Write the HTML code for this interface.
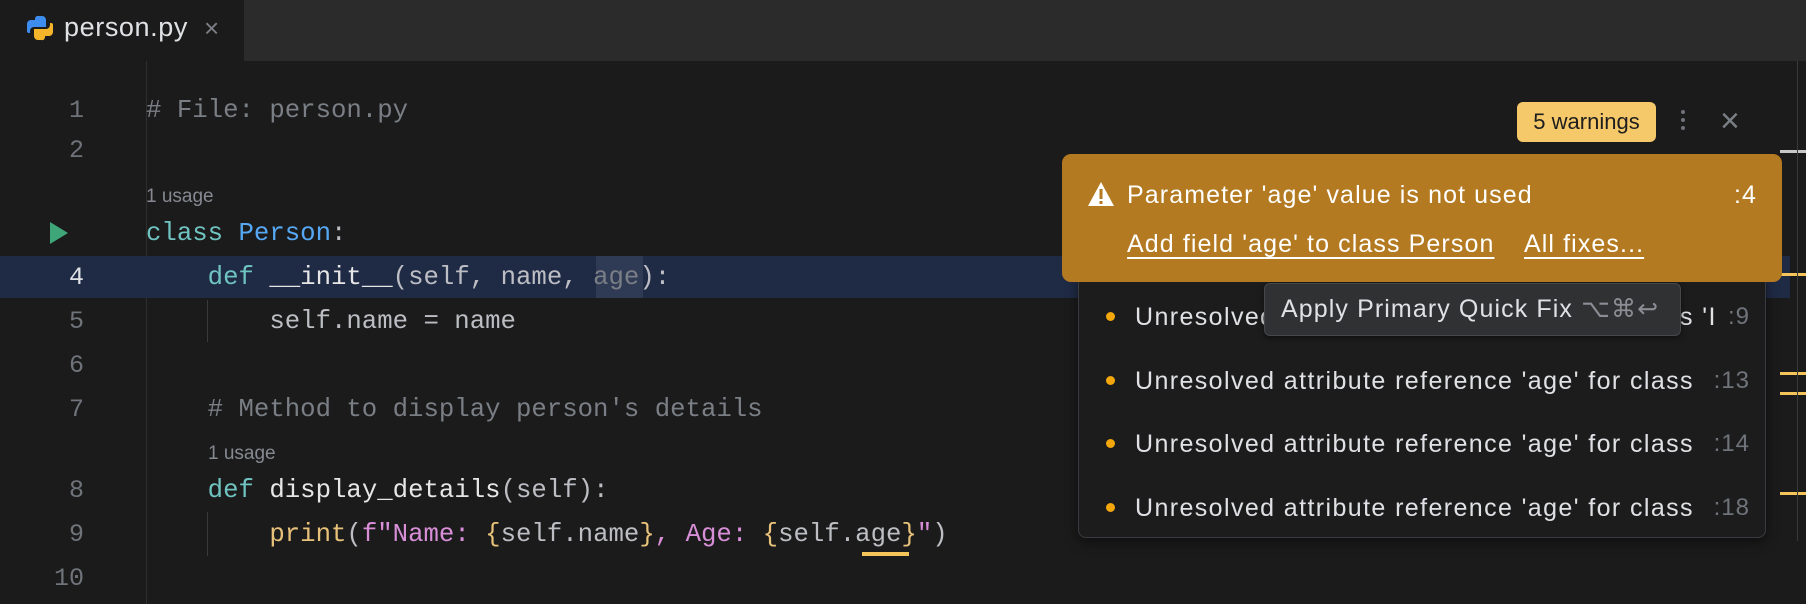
<!DOCTYPE html>
<html><head><meta charset="utf-8"><style>
*{margin:0;padding:0;box-sizing:border-box}
body{width:1806px;height:604px;background:#1b1b1b;position:relative;overflow:hidden;font-family:"Liberation Sans",sans-serif}
.a{position:absolute;white-space:pre}
.m{font-family:"Liberation Mono",monospace;font-size:25.7px;line-height:44px;color:#bcbec4}
.ln{font-family:"Liberation Mono",monospace;font-size:25px;line-height:44px;color:#6f737a;width:60px;text-align:right;left:24px}
.c{color:#7a7e85}.k{color:#6fc3c0}.b{color:#56a8f5}.y{color:#e8c27a}.p{color:#d88fd8}.g{color:#7a7e85}
.u{font-size:19px;color:#868991;font-family:"Liberation Sans",sans-serif}
.it{font-size:25px;letter-spacing:1.4px;color:#dfe1e5;line-height:30px}
.num{font-size:24px;letter-spacing:1px;color:#6f737a;line-height:30px;width:80px;text-align:right;left:1670px}
.dot{width:9px;height:9px;border-radius:50%;background:#f2a80c;position:absolute}
.w{font-size:25px;letter-spacing:1.1px;line-height:30px;color:#fff}
</style></head><body>
<div class="a" style="left:0;top:0;width:1806px;height:61px;background:#2b2b2b"></div>
<div class="a" style="left:0;top:0;width:244px;height:61px;background:#1b1b1b"></div>
<svg class="a" style="left:27px;top:15px" width="26" height="26" viewBox="0 0 26 26">
<path d="M12 1h3a4 4 0 0 1 4 4v7H7a4 4 0 0 0-4 4v2H2a2 2 0 0 1-2-2V9a4 4 0 0 1 4-4h4V4a3 3 0 0 1 4-3z" fill="#3d8df0"/>
<path d="M14 25h-3a4 4 0 0 1-4-4v-7h12a4 4 0 0 0 4-4V8h1a2 2 0 0 1 2 2v7a4 4 0 0 1-4 4h-4v1a3 3 0 0 1-4 3z" fill="#f5b52a"/>
</svg>
<div class="a" style="left:64px;top:12px;font-size:27px;letter-spacing:0.6px;color:#dfe1e5">person.py</div>
<div class="a" style="left:204px;top:13px;font-size:26px;color:#7a7e85">×</div>
<div class="a" style="left:146px;top:61px;width:1px;height:543px;background:#2e2e2e"></div>
<div class="a" style="left:0;top:256px;width:1790px;height:42px;background:#1f2a45"></div>
<div class="a" style="left:596px;top:256px;width:47px;height:42px;background:#2f3a55"></div>
<div class="a" style="left:207px;top:300px;width:1px;height:42px;background:#3a3a3a"></div>
<div class="a" style="left:207px;top:512px;width:1px;height:44px;background:#3a3a3a"></div>

<div class="a ln" style="top:89px">1</div>
<div class="a ln" style="top:129px">2</div>
<div class="a" style="left:50px;top:222px;width:0;height:0;border-left:18px solid #3fa67a;border-top:11px solid transparent;border-bottom:11px solid transparent"></div>
<div class="a ln" style="top:256px;color:#dfe1e5">4</div>
<div class="a ln" style="top:300px">5</div>
<div class="a ln" style="top:344px">6</div>
<div class="a ln" style="top:388px">7</div>
<div class="a ln" style="top:469px">8</div>
<div class="a ln" style="top:513px">9</div>
<div class="a ln" style="top:557px">10</div>

<div class="a m c" style="left:146px;top:89px"># File: person.py</div>
<div class="a u" style="left:146px;top:186px">1 usage</div>
<div class="a m" style="left:146px;top:212px"><span class="k">class</span> <span class="b">Person</span>:</div>
<div class="a m" style="left:146px;top:256px">    <span class="k">def</span> <span style="color:#e6e6e6">__init__</span>(self, name, <span class="g">age</span>):</div>
<div class="a m" style="left:146px;top:300px">        self.name = name</div>
<div class="a m c" style="left:146px;top:388px">    # Method to display person's details</div>
<div class="a u" style="left:208px;top:443px">1 usage</div>
<div class="a m" style="left:146px;top:469px">    <span class="k">def</span> <span style="color:#e6e6e6">display_details</span>(self):</div>
<div class="a m" style="left:146px;top:513px">        <span class="y">print</span>(<span class="p">f"Name: </span><span class="y">{</span>self.name<span class="y">}</span><span class="p">, Age: </span><span class="y">{</span>self.age<span class="y">}</span><span class="p">"</span>)</div>
<div class="a" style="left:862px;top:552px;width:47px;height:4px;background:#f5c45a"></div>

<div class="a" style="left:1517px;top:102px;width:139px;height:40px;background:#f5c869;border-radius:6px;font-size:22px;line-height:40px;text-align:center;color:#1e1e1e">5 warnings</div>
<div class="a" style="left:1681px;top:110px;width:4px;height:4px;border-radius:50%;background:#6f737a;box-shadow:0 8px 0 #6f737a,0 16px 0 #6f737a"></div>
<div class="a" style="left:1720px;top:104px;font-size:34px;line-height:34px;color:#7a7e85">×</div>

<div class="a" style="left:1780px;top:150px;width:26px;height:3px;background:#c8c8c8"></div>
<div class="a" style="left:1780px;top:273px;width:26px;height:3px;background:#f5c45a"></div>
<div class="a" style="left:1780px;top:372px;width:26px;height:3px;background:#f5c45a"></div>
<div class="a" style="left:1780px;top:392px;width:26px;height:3px;background:#f5c45a"></div>
<div class="a" style="left:1780px;top:492px;width:26px;height:3px;background:#f5c45a"></div>
<div class="a" style="left:1797px;top:61px;width:1px;height:480px;background:#3a3a3a"></div>

<div class="a" style="left:1078px;top:270px;width:688px;height:268px;background:#1c1c1c;border:1px solid #393b40;border-radius:8px;box-shadow:0 4px 12px rgba(0,0,0,.5)"></div>
<div class="dot" style="left:1106px;top:312px"></div>
<div class="a it" style="left:1135px;top:302px">Unresolved attribute reference 'age' for class 'I</div>
<div class="a num" style="top:302px">:9</div>
<div class="dot" style="left:1106px;top:376px"></div>
<div class="a it" style="left:1135px;top:366px">Unresolved attribute reference 'age' for class</div>
<div class="a num" style="top:366px">:13</div>
<div class="dot" style="left:1106px;top:439px"></div>
<div class="a it" style="left:1135px;top:429px">Unresolved attribute reference 'age' for class</div>
<div class="a num" style="top:429px">:14</div>
<div class="dot" style="left:1106px;top:503px"></div>
<div class="a it" style="left:1135px;top:493px">Unresolved attribute reference 'age' for class</div>
<div class="a num" style="top:493px">:18</div>

<div class="a" style="left:1264px;top:283px;width:417px;height:53px;background:#303133;border:1px solid #45474b;border-radius:6px;box-shadow:0 2px 6px rgba(0,0,0,.5)"></div>
<div class="a" style="left:1281px;top:294px;font-size:25px;letter-spacing:1.1px;line-height:30px;color:#dfe1e5">Apply Primary Quick Fix <span style="color:#8a8d93">⌥⌘↩</span></div>

<div class="a" style="left:1062px;top:154px;width:720px;height:128px;background:#b37a21;border-radius:9px"></div>
<svg class="a" style="left:1087px;top:181px" width="28" height="26" viewBox="0 0 28 26"><path d="M14 1L27 25H1z" fill="#fff"/><rect x="12.5" y="8" width="3" height="10" fill="#b37a21"/><rect x="12.5" y="20" width="3" height="3" fill="#b37a21"/></svg>
<div class="a w" style="left:1127px;top:180px">Parameter 'age' value is not used</div>
<div class="a w" style="left:1677px;top:180px;width:80px;text-align:right">:4</div>
<div class="a w" style="left:1127px;top:229px;text-decoration:underline;text-underline-offset:5px">Add field 'age' to class Person</div>
<div class="a w" style="left:1524px;top:229px;text-decoration:underline;text-underline-offset:5px">All fixes...</div>
</body></html>
